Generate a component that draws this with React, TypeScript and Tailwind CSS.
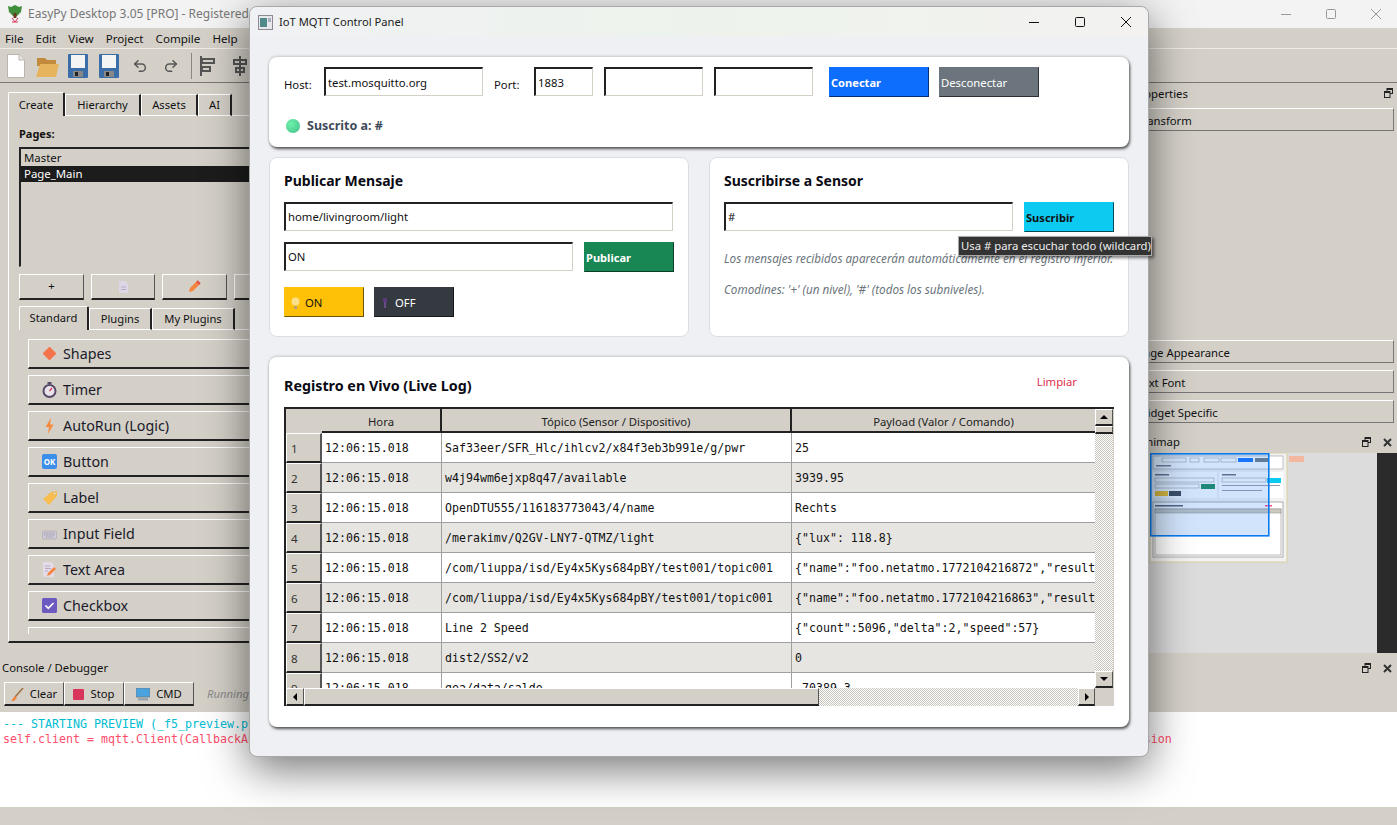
import { Undo2, Redo2 } from 'lucide-react';
import type { ReactNode } from 'react';

const raised = 'border-t border-l border-t-white border-l-white border-r border-r-[#555] border-b-2 border-b-[#222]';
const sunken = 'border-t-2 border-l-2 border-t-[#222] border-l-[#222] border-r border-b border-r-[#d4d0c8] border-b-[#d4d0c8]';
const flatBtn = 'border-t border-l border-t-white border-l-white border-r border-b border-r-[#777] border-b-[#777]';
const dither = 'bg-[repeating-conic-gradient(#c8c4bc_0_25%,#ffffff_0_50%)] bg-[length:2px_2px]';
const tabOff = 'flex h-[22px] items-center justify-center border-t border-l border-t-white border-l-white border-r-2 border-r-[#222] border-b border-b-white pt-px';
const tabOn = 'flex h-[24px] items-center justify-center rounded-t-[2px] border-t border-l border-t-white border-l-white border-r-2 border-r-[#222]';

const rows = [
  ['Saf33eer/SFR_Hlc/ihlcv2/x84f3eb3b991e/g/pwr', '25'],
  ['w4j94wm6ejxp8q47/available', '3939.95'],
  ['OpenDTU555/116183773043/4/name', 'Rechts'],
  ['/merakimv/Q2GV-LNY7-QTMZ/light', '{"lux": 118.8}'],
  ['/com/liuppa/isd/Ey4x5Kys684pBY/test001/topic001', '{"name":"foo.netatmo.1772104216872","result":"ok","value":1}'],
  ['/com/liuppa/isd/Ey4x5Kys684pBY/test001/topic001', '{"name":"foo.netatmo.1772104216863","result":"ok","value":1}'],
  ['Line 2 Speed', '{"count":5096,"delta":2,"speed":57}'],
  ['dist2/SS2/v2', '0'],
  ['gea/data/saldo', '-70389.3'],
];

function DiamondIcon() {
  return <svg width="15" height="15" viewBox="0 0 15 15"><rect x="2.6" y="2.6" width="9.8" height="9.8" rx="1" transform="rotate(45 7.5 7.5)" fill="#f4734a" /></svg>;
}
function TimerIcon() {
  return (
    <svg width="15" height="16" viewBox="0 0 15 16">
      <rect x="5.5" y="0" width="4" height="2" fill="#5a4a6a" />
      <circle cx="7.5" cy="9" r="6" fill="#e8e4ec" stroke="#5a4a6a" strokeWidth="2" />
      <path d="M7.5 9 L10 6" stroke="#d9345a" strokeWidth="1.3" />
    </svg>
  );
}
function BoltIcon() {
  return <svg width="15" height="16" viewBox="0 0 15 16"><path d="M9 0 L3.5 9 H7 L6 16 L11.5 6.5 H8 Z" fill="#f58a3c" /></svg>;
}
function OkIcon() {
  return (
    <span className="flex h-[15px] w-[15px] items-center justify-center rounded-[2px] bg-[#3b8eea] text-[8px] font-bold leading-none text-white">OK</span>
  );
}
function TagIcon() {
  return (
    <svg width="16" height="16" viewBox="0 0 16 16">
      <path d="M1 9 L9 2 L15 1 L15 6 L7 15 Z" fill="#f7bd4f" />
      <circle cx="12.5" cy="3.5" r="1.2" fill="#fff" stroke="#b98a2c" strokeWidth="0.5" />
    </svg>
  );
}
function KeyboardIcon() {
  return (
    <svg width="15" height="15" viewBox="0 0 15 15">
      <rect x="0.5" y="5" width="14" height="8" rx="1" fill="#cfcbd6" stroke="#a7a2b3" strokeWidth="0.6" />
      <path d="M2 7 H13 M2 9 H13 M4 11 H11" stroke="#8d889a" strokeWidth="0.8" strokeDasharray="1 0.6" />
    </svg>
  );
}
function MemoIcon() {
  return (
    <svg width="14" height="16" viewBox="0 0 14 16">
      <path d="M1 0 H9 L12 3 V15 H1 Z" fill="#e3dce8" />
      <path d="M3 4 H8 M3 6.5 H9 M3 9 H6" stroke="#a99db4" strokeWidth="0.8" />
      <path d="M5 14 L6 11 L12 5 L14 7 L8 13 Z" fill="#f5843e" />
    </svg>
  );
}
function CheckIcon() {
  return (
    <svg width="15" height="15" viewBox="0 0 15 15">
      <rect width="15" height="15" rx="1.5" fill="#6d5ac0" />
      <path d="M3.5 7.5 L6.3 10.3 L11.5 5" fill="none" stroke="#fff" strokeWidth="1.7" />
    </svg>
  );
}

const widgets: [string, ReactNode][] = [
  ['Shapes', <DiamondIcon />],
  ['Timer', <TimerIcon />],
  ['AutoRun (Logic)', <BoltIcon />],
  ['Button', <OkIcon />],
  ['Label', <TagIcon />],
  ['Input Field', <KeyboardIcon />],
  ['Text Area', <MemoIcon />],
  ['Checkbox', <CheckIcon />],
];

function FloatIcon() {
  return (
    <svg width="9" height="10" viewBox="0 0 9 10" fill="none" stroke="#222">
      <rect x="3" y="0.5" width="5.5" height="5" />
      <path d="M3 1.5 H8.5" />
      <rect x="0.5" y="3.5" width="5.5" height="6" fill="#d4d0c8" />
      <path d="M0.5 4.5 H6" />
    </svg>
  );
}
function DockClose() {
  return <svg width="9" height="9" viewBox="0 0 9 9" stroke="#333" strokeWidth="2"><path d="M1 1 L8 8 M8 1 L1 8" /></svg>;
}

function CaptionButtons({ color, gap }: { color: string; gap: string }) {
  return (
    <div className={`ml-auto flex items-center ${gap}`}>
      <svg width="10" height="10" viewBox="0 0 10 10" stroke={color}><path d="M0 5.5 H10" /></svg>
      <svg width="10" height="10" viewBox="0 0 10 10" fill="none" stroke={color}><rect x="0.5" y="0.5" width="9" height="9" rx="1" /></svg>
      <svg width="10" height="10" viewBox="0 0 10 10" stroke={color}><path d="M0 0 L10 10 M10 0 L0 10" /></svg>
    </div>
  );
}

function LogoTree() {
  return (
    <svg width="16" height="18" viewBox="0 0 16 18">
      <path d="M1 1 L4 2 L8 0 L12 2 L15 1 L14 7 L10 11 H6 L2 7 Z" fill="#3f8f3a" />
      <rect x="6.5" y="8" width="3" height="5" fill="#6b3a1e" />
      <path d="M5 13 L8 17 L11 13 M5 17 L11 17" stroke="#d9345a" strokeWidth="1" fill="none" />
    </svg>
  );
}

function SaveIcon({ className }: { className: string }) {
  return (
    <svg className={className} width="20" height="24" viewBox="0 0 20 24">
      <rect width="20" height="24" rx="1" fill="#3b6ea8" />
      <rect x="3" y="1" width="14" height="13" fill="#f4f4f4" />
      <rect x="5" y="17" width="10" height="6" fill="#888" />
      <rect x="7" y="18" width="3" height="4" fill="#222" />
    </svg>
  );
}

function Toolbar() {
  return (
    <div className="flex h-[35px] items-center border-b border-t border-b-[#7a7870] border-t-[#efece6] pl-[7px]">
      <svg width="18" height="24" viewBox="0 0 18 24">
        <path d="M0.5 0.5 H12 L17.5 6 V23.5 H0.5 Z" fill="#fff" stroke="#b8b5ae" />
        <path d="M12 0.5 V6 H17.5" fill="#e8e6e0" stroke="#b8b5ae" />
      </svg>
      <svg className="ml-[11px]" width="23" height="24" viewBox="0 0 23 24">
        <path d="M1 4 H9 L11 6 H20 V12 H1 Z" fill="#c28a3c" />
        <path d="M4 10 H23 L20 23 H0 Z" fill="#e5b45c" />
      </svg>
      <SaveIcon className="ml-[9px]" />
      <SaveIcon className="ml-[11px]" />
      <Undo2 className="ml-[13px] text-[#555]" size={16} strokeWidth={2.2} />
      <Redo2 className="ml-[15px] text-[#555]" size={16} strokeWidth={2.2} />
      <div className="ml-[12px] h-[26px] w-px bg-[#8a8880]" />
      <svg className="ml-[8px]" width="16" height="20" viewBox="0 0 16 20" fill="none" stroke="#555" strokeWidth="2">
        <path d="M1 0 V20" />
        <rect x="2" y="3" width="12" height="4" />
        <rect x="2" y="11" width="8" height="4" />
      </svg>
      <svg className="ml-[17px]" width="14" height="20" viewBox="0 0 14 20" fill="none" stroke="#555" strokeWidth="2">
        <path d="M7 0 V20" />
        <rect x="1" y="4" width="12" height="4" />
        <rect x="3" y="12" width="8" height="4" />
      </svg>
    </div>
  );
}

function LeftPanel() {
  return (
    <div className="flex w-[300px] shrink-0 flex-col pl-[8px] pt-[9px]">
      <div className="flex h-[24px] items-end text-[11.2px]">
        <div className={`${tabOn} w-[57px] pt-[2px]`}>Create</div>
        <div className={`${tabOff} w-[76px]`}>Hierarchy</div>
        <div className={`${tabOff} w-[57px]`}>Assets</div>
        <div className={`${tabOff} w-[34px]`}>AI</div>
        <div className="h-px flex-1 bg-white" />
      </div>
      <div className="flex h-[527px] flex-col border-b-2 border-l border-b-[#222] border-l-white pl-[10px]">
        <div className="mt-[10px] h-[16px] text-[11px] font-bold leading-[16px]">Pages:</div>
        <div className={`mt-[5px] h-[120px] pt-[1px] text-[11.4px] leading-[16px] ${sunken}`}>
          <div className="pl-[3px]">Master</div>
          <div className="bg-[#1c1c1c] pl-[3px] text-white">Page_Main</div>
        </div>
        <div className="mt-[7px] flex gap-[7px]">
          <div className={`flex h-[26px] w-[65px] items-center justify-center text-[11.3px] ${raised}`}>+</div>
          <div className={`flex h-[26px] w-[64px] items-center justify-center ${raised}`}>
            <svg width="9" height="12" viewBox="0 0 9 12"><path d="M0 0 H6 L9 3 V12 H0 Z" fill="#dcd6e6" /><path d="M2 6 H7 M2 8.5 H7" stroke="#b5acc4" /></svg>
          </div>
          <div className={`flex h-[26px] w-[65px] items-center justify-center ${raised}`}>
            <svg width="13" height="13" viewBox="0 0 13 13"><path d="M1 12 L2 8 L9 1 L12 4 L5 11 Z" fill="#f5843e" /><path d="M9 1 L12 4" stroke="#e34a4a" strokeWidth="2" /></svg>
          </div>
          <div className={`h-[26px] flex-1 ${raised}`} />
        </div>
        <div className="mt-[6px] flex h-[24px] items-end text-[11.2px]">
          <div className={`${tabOn} w-[70px]`}>Standard</div>
          <div className={`${tabOff} w-[63px]`}>Plugins</div>
          <div className={`${tabOff} w-[83px]`}>My Plugins</div>
          <div className="h-px flex-1 bg-white" />
        </div>
        <div className="ml-[9px] mt-[9px] flex h-[295px] flex-col gap-[6px] overflow-hidden">
          {widgets.map(([label, icon]) => (
            <div key={label} className={`flex h-[30px] shrink-0 items-center pl-[13px] text-[14.3px] text-[#1a1a2a] ${raised}`}>
              <span className="flex w-[21px] shrink-0 items-center">{icon}</span>
              {label}
            </div>
          ))}
          <div className={`h-[30px] shrink-0 ${raised}`} />
        </div>
      </div>
    </div>
  );
}

function DockButton({ label }: { label: string }) {
  return <div className={`flex h-[23px] items-center pl-[10px] pt-[3px] text-[11.3px] ${flatBtn}`}>{label}</div>;
}

function MinimapDrawing() {
  return (
    <svg className="block" width="251" height="200" viewBox="1126 453 251 200">
      <defs><filter id="b"><feGaussianBlur stdDeviation="0.55" /></filter></defs>
      <g filter="url(#b)">
        <rect x="1150" y="453" width="137" height="109" fill="#f2f2f2" stroke="#d9d0a0" />
        <rect x="1153" y="456" width="130" height="13" fill="#fff" stroke="#999" strokeWidth="0.6" />
        <rect x="1153" y="472" width="64" height="26" fill="#fff" />
        <rect x="1219" y="472" width="64" height="26" fill="#fff" />
        <rect x="1153" y="502" width="130" height="55" fill="#fff" stroke="#999" strokeWidth="0.8" />
        <rect x="1162" y="458" width="24" height="4" fill="#fff" stroke="#888" strokeWidth="0.5" />
        <rect x="1190" y="458" width="9" height="4" fill="#fff" stroke="#888" strokeWidth="0.5" />
        <rect x="1204" y="458" width="15" height="4" fill="#fff" stroke="#888" strokeWidth="0.5" />
        <rect x="1221" y="458" width="15" height="4" fill="#fff" stroke="#888" strokeWidth="0.5" />
        <rect x="1238" y="458" width="15" height="4" fill="#0d6efd" />
        <rect x="1255" y="458" width="13" height="4" fill="#6c757d" />
        <rect x="1156" y="465" width="15" height="1.5" fill="#778" />
        <rect x="1155" y="474" width="14" height="1.5" fill="#667" />
        <rect x="1155" y="478" width="59" height="4" fill="#fff" stroke="#888" strokeWidth="0.5" />
        <rect x="1155" y="484" width="44" height="4" fill="#fff" stroke="#888" strokeWidth="0.5" />
        <rect x="1201" y="484" width="14" height="5" fill="#198754" />
        <rect x="1155" y="491" width="13" height="5" fill="#ffc107" />
        <rect x="1169" y="491" width="12" height="5" fill="#343a40" />
        <rect x="1222" y="474" width="14" height="1.5" fill="#667" />
        <rect x="1222" y="478" width="44" height="4" fill="#fff" stroke="#888" strokeWidth="0.5" />
        <rect x="1267" y="478" width="14" height="5" fill="#0dcaf0" />
        <rect x="1222" y="485" width="58" height="1" fill="#99a" />
        <rect x="1222" y="490" width="40" height="1" fill="#99a" />
        <rect x="1155" y="505" width="28" height="1.5" fill="#556" />
        <rect x="1155" y="509" width="126" height="46" fill="#fff" stroke="#aaa" strokeWidth="0.8" />
        <rect x="1155" y="509" width="126" height="4" fill="#cfcabf" stroke="#888" strokeWidth="0.5" />
        <rect x="1265" y="505" width="7" height="1.5" fill="#f48" />
        <rect x="1289" y="456" width="15" height="6" fill="#f4b8a0" />
      </g>
      <rect x="1150.8" y="453.8" width="118" height="82" fill="#3f8ff0" fillOpacity="0.24" stroke="#0a7cf0" strokeWidth="1.6" />
    </svg>
  );
}

function RightDock() {
  return (
    <div className="flex h-[571px] flex-1 flex-col overflow-hidden text-[11.3px]">
      <div className="flex h-[25px] items-center justify-between pb-[3px] pl-[7px] pr-[4px]">
        <span>Properties</span>
        <span className="mb-[2px]"><FloatIcon /></span>
      </div>
      <div className="pr-[3px]"><DockButton label="Transform" /></div>
      <div className="mt-[209px] flex flex-col gap-[7px] pr-[3px]">
        <DockButton label="Page Appearance" />
        <DockButton label="Text  Font" />
        <DockButton label="Widget Specific" />
      </div>
      <div className="flex h-[30px] items-center justify-between pl-[7px] pr-[5px] pt-[8px]">
        <span className="pt-px">Minimap</span>
        <span className="flex items-center gap-[12px]"><FloatIcon /><DockClose /></span>
      </div>
      <div className="flex h-[200px] bg-[#dcdcdc]">
        <MinimapDrawing />
        <div className="flex-1 bg-[#2b2b2b]" />
      </div>
    </div>
  );
}

function ConsoleDock() {
  const btn = `flex h-[24px] items-center justify-center gap-[6px] pt-[2px] text-[11.3px] ${raised}`;
  return (
    <div className="flex flex-col">
      <div className="flex h-[58px] flex-col">
        <div className="flex h-[28px] items-center justify-between pl-[2px] pr-[5px] text-[11.3px]">
          <span>Console / Debugger</span>
          <span className="flex items-center gap-[12px]"><FloatIcon /><DockClose /></span>
        </div>
        <div className="flex items-center pl-[4px]">
          <div className={`${btn} w-[60px]`}>
            <svg width="13" height="13" viewBox="0 0 13 13"><path d="M12 0 L4 9" stroke="#a0703c" strokeWidth="1.5" /><path d="M4 8 L6 10 L3 13 H0 Z" fill="#f5843e" /></svg>
            Clear
          </div>
          <div className={`${btn} w-[60px]`}>
            <span className="h-[11px] w-[11px] rounded-[1px] bg-[#d9345a]" />
            Stop
          </div>
          <div className={`${btn} w-[70px]`}>
            <svg width="14" height="13" viewBox="0 0 14 13"><rect width="14" height="9" fill="#4aa3df" stroke="#6a7a88" strokeWidth="0.8" /><rect x="2" y="10" width="10" height="2.5" fill="#9aa4ac" /></svg>
            CMD
          </div>
          <span className="ml-[13px] text-[11.3px] italic text-[#8a8a8a]">Running...</span>
        </div>
      </div>
      <div className="h-[95px] whitespace-nowrap bg-white pl-[3px] pt-[5px] font-['DejaVu_Sans_Mono',monospace] text-[11.63px] leading-[15px]">
        <div className="text-[#00bcd4]">--- STARTING PREVIEW (_f5_preview.py) ---</div>
        <div className="text-[#ff4d6a]">{'self.client = mqtt.Client(CallbackAPIVersion.VERSION1, client_id="iot_mqtt_panel_1") DeprecationWarning: Callback API version 1 is deprecated, update to latest version'}</div>
      </div>
    </div>
  );
}

function Field({ value, className }: { value?: string; className: string }) {
  return <div className={`flex items-center pl-[2px] text-[11.3px] text-[#111] ${sunken} ${className}`}>{value}</div>;
}

function LogTable() {
  return (
    <div className="flex h-[299px] flex-col border-l-2 border-t-2 border-l-[#222] border-t-[#222] bg-[#d4d0c8] text-[11.3px]">
      <div className="flex h-[279px]">
        <div className="flex w-[809px] flex-col overflow-hidden bg-white">
          <div className="grid h-[24px] shrink-0 grid-cols-[36px_120px_350px_303px] bg-[#d4d0c8] text-[#222]">
            <div className="border-b-2 border-r-2 border-b-[#d4d0c8] border-r-[#d4d0c8]" />
            <div className="flex items-center justify-center border-b-2 border-r-2 border-b-[#222] border-r-[#222] pt-[4px]">Hora</div>
            <div className="flex items-center justify-center border-b-2 border-r-2 border-b-[#222] border-r-[#222] pt-[4px]">Tópico (Sensor / Dispositivo)</div>
            <div className="flex items-center justify-center border-b-2 border-b-[#222] pt-[4px]">Payload (Valor / Comando)</div>
          </div>
          {rows.map(([topic, payload], i) => (
            <div key={i} className={`grid h-[30px] shrink-0 grid-cols-[36px_120px_350px_303px] font-['DejaVu_Sans_Mono',monospace] text-[11.6px] text-[#111] ${i % 2 ? 'bg-[#e6e5e1]' : 'bg-white'}`}>
              <div className={`flex items-center bg-[#d4d0c8] pl-[4px] pt-[2px] font-['Noto_Sans',sans-serif] text-[11.6px] text-[#333] ${raised} border-r-2 border-r-[#222]`}>{i + 1}</div>
              <div className="flex items-center border-b border-r border-b-[#a0a0a0] border-r-[#a0a0a0] pl-[3px] pt-[2px]">12:06:15.018</div>
              <div className="flex items-center overflow-hidden whitespace-nowrap border-b border-r border-b-[#a0a0a0] border-r-[#a0a0a0] pl-[3px] pt-[2px]">{topic}</div>
              <div className="flex items-center overflow-hidden whitespace-nowrap border-b border-b-[#a0a0a0] pl-[3px] pt-[2px]">{payload}</div>
            </div>
          ))}
        </div>
        <div className="flex w-[18px] flex-col">
          <div className={`flex h-[17px] shrink-0 items-center justify-center bg-[#d4d0c8] ${raised}`}>
            <span className="h-0 w-0 border-x-[4px] border-b-[4px] border-x-transparent border-b-black" />
          </div>
          <div className={`h-[8px] shrink-0 bg-[#d4d0c8] ${raised}`} />
          <div className={`flex-1 ${dither}`} />
          <div className={`flex h-[17px] shrink-0 items-center justify-center bg-[#d4d0c8] ${raised}`}>
            <span className="h-0 w-0 border-x-[4px] border-t-[4px] border-x-transparent border-t-black" />
          </div>
        </div>
      </div>
      <div className="flex h-[18px]">
        <div className={`flex w-[18px] shrink-0 items-center justify-center bg-[#d4d0c8] ${raised}`}>
          <span className="h-0 w-0 border-y-[4px] border-r-[4px] border-y-transparent border-r-black" />
        </div>
        <div className={`w-[515px] shrink-0 bg-[#d4d0c8] ${raised}`} />
        <div className={`w-[259px] ${dither}`} />
        <div className={`flex w-[17px] shrink-0 items-center justify-center bg-[#d4d0c8] ${raised}`}>
          <span className="h-0 w-0 border-y-[4px] border-l-[4px] border-y-transparent border-l-black" />
        </div>
      </div>
    </div>
  );
}

function MqttWindow() {
  const solidCard = 'rounded-lg bg-white shadow-[1px_2px_3px_rgba(0,0,0,0.65),0_-1px_3px_rgba(0,0,0,0.15)]';
  const softCard = 'h-[180px] w-[420px] rounded-lg border border-[#dcdde4] bg-white px-[14px] pt-[13px]';
  const title = 'text-[14px] font-bold leading-[20px] text-[#0a0a14]';
  return (
    <div className="absolute left-[249px] top-[6px] h-[751px] w-[900px] rounded-lg border border-[#a8a8a8] bg-[#eff0f4] shadow-[0_12px_44px_rgba(0,0,0,0.55)]">
      <div className="flex h-[30px] items-center rounded-t-lg bg-gradient-to-r from-[#f0f1f4] via-[#edf3ec] to-[#f3f2f0] pl-[8px] pr-[17px]">
        <svg width="15" height="15" viewBox="0 0 15 15">
          <rect x="0.5" y="0.5" width="14" height="14" fill="#e8e8ec" stroke="#8a8a90" />
          <rect x="2" y="3" width="7" height="9" fill="#4e8a8a" />
          <rect x="10" y="3" width="3" height="4" fill="#a8b0c0" />
        </svg>
        <span className="ml-[6px] text-[11.2px] text-[#222]">IoT MQTT Control Panel</span>
        <CaptionButtons color="#111" gap="gap-[36px]" />
      </div>
      <div className="flex flex-col px-[19px] pt-[20px]">
        <div className={`flex h-[90px] flex-col px-[15px] pt-[10px] ${solidCard}`}>
          <div className="flex items-start text-[11.3px] text-[#111]">
            <span className="w-[40px] pt-[10px]">Host:</span>
            <Field value="test.mosquitto.org" className="h-[29px] w-[159px] pt-[2px]" />
            <span className="ml-[11px] w-[40px] pt-[10px]">Port:</span>
            <Field value="1883" className="h-[29px] w-[59px] pt-[2px]" />
            <Field className="ml-[11px] h-[29px] w-[99px]" />
            <Field className="ml-[11px] h-[29px] w-[99px]" />
            <div className="ml-[16px] flex h-[30px] w-[100px] items-center border border-[#0d6efd] border-b-[#08306e] border-r-[#08306e] bg-[#0d6efd] pl-[1px] pt-[2px] text-[11.1px] font-bold text-white">Conectar</div>
            <div className="ml-[10px] flex h-[30px] w-[100px] items-center border border-[#6c757d] border-b-[#2b3036] border-r-[#2b3036] bg-[#6c757d] pl-[1px] pt-[2px] text-white">Desconectar</div>
          </div>
          <div className="mt-[20px] flex items-center text-[12.5px] font-bold text-[#3f4a5a]">
            <span className="ml-[2px] h-[14px] w-[14px] rounded-full bg-[radial-gradient(circle_at_35%_35%,#6ff0a8,#3fbf8a)]" />
            <span className="ml-[7px]">Suscrito a: #</span>
          </div>
        </div>
        <div className="mt-[10px] flex gap-[20px]">
          <div className={softCard}>
            <div className={title}>Publicar Mensaje</div>
            <div className="mt-[11px]"><Field value="home/livingroom/light" className="h-[29px] w-[389px] pt-[1px]" /></div>
            <div className="mt-[11px] flex items-start">
              <Field value="ON" className="h-[29px] w-[289px] pt-[1px]" />
              <div className="ml-[11px] flex h-[30px] w-[90px] items-center border border-[#198754] border-b-[#0b3d26] border-r-[#0b3d26] bg-[#198754] pl-[1px] pt-[2px] text-[11.1px] font-bold text-white">Publicar</div>
            </div>
            <div className="mt-[15px] flex gap-[10px] text-[11.3px]">
              <div className="flex h-[30px] w-[80px] items-center border border-[#ffc107] border-b-[#6b5206] border-r-[#6b5206] bg-[#ffc107] pl-[6px] pt-[2px] text-[#111]">
                <svg width="9" height="13" viewBox="0 0 9 13"><circle cx="4.5" cy="4.5" r="4" fill="#fde08a" /><rect x="3" y="9" width="3" height="3" fill="#b8a070" /></svg>
                <span className="ml-[5px]">ON</span>
              </div>
              <div className="flex h-[30px] w-[80px] items-center border border-[#343a40] border-b-[#15181b] border-r-[#15181b] bg-[#343a40] pl-[7px] pt-[2px] text-white">
                <svg width="6" height="13" viewBox="0 0 6 13"><rect x="1" y="1" width="4" height="4" fill="#5a3a78" /><rect x="2" y="5" width="2" height="6" fill="#6a4a8a" /></svg>
                <span className="ml-[7px]">OFF</span>
              </div>
            </div>
          </div>
          <div className={softCard}>
            <div className={title}>Suscribirse a Sensor</div>
            <div className="mt-[11px] flex items-start">
              <Field value="#" className="h-[29px] w-[289px] pt-[1px]" />
              <div className="ml-[11px] flex h-[30px] w-[90px] items-center border border-[#0dcaf0] border-b-[#064a58] border-r-[#064a58] bg-[#0dcaf0] pl-[1px] pt-[2px] text-[11.1px] font-bold text-[#111]">Suscribir</div>
            </div>
            <div className="mt-[18px] whitespace-nowrap text-[11.7px] italic leading-[16px] text-[#6c757d]">Los mensajes recibidos aparecerán automáticamente en el registro inferior.</div>
            <div className="mt-[15px] whitespace-nowrap text-[11.7px] italic leading-[16px] text-[#6c757d]">Comodines: '+' (un nivel), '#' (todos los subniveles).</div>
          </div>
        </div>
        <div className={`mt-[20px] h-[370px] px-[15px] pt-[19px] ${solidCard}`}>
          <div className="flex h-[21px] items-start justify-between">
            <div className="text-[14.3px] font-bold leading-[20px] text-[#0a0a14]">Registro en Vivo (Live Log)</div>
            <div className="mr-[37px] text-[11.3px] leading-[12px] text-[#e0304f]">Limpiar</div>
          </div>
          <div className="mt-[10px]"><LogTable /></div>
        </div>
      </div>
    </div>
  );
}

export default function App() {
  return (
    <div className="relative h-[825px] w-[1397px] overflow-hidden bg-[#d4d0c8] font-['Noto_Sans',sans-serif] text-[11.3px] text-[#111]">
      <div className="flex h-[28px] items-center bg-[#f3f3f3] pl-[7px] pr-[16px]">
        <LogoTree />
        <span className="ml-[5px] text-[12px] text-[#777]">EasyPy Desktop 3.05 [PRO] - Registered to user</span>
        <CaptionButtons color="#999" gap="gap-[35px]" />
      </div>
      <div className="flex h-[20px] items-center gap-[12px] pl-[5px] pt-[2px] text-[11.6px]">
        <span>File</span><span>Edit</span><span>View</span><span>Project</span><span>Compile</span><span>Help</span>
      </div>
      <Toolbar />
      <div className="flex h-[571px]">
        <LeftPanel />
        <div className="w-[826px] shrink-0" />
        <RightDock />
      </div>
      <ConsoleDock />
      <MqttWindow />
      <div className="absolute left-[958px] top-[236px] z-10 flex h-[20px] w-[194px] items-center whitespace-nowrap border border-[#aaa] bg-[#333] pl-[2px] text-[11.3px] text-[#eee] shadow-[2px_2px_3px_rgba(0,0,0,0.5)]">Usa # para escuchar todo (wildcard)</div>
    </div>
  );
}
